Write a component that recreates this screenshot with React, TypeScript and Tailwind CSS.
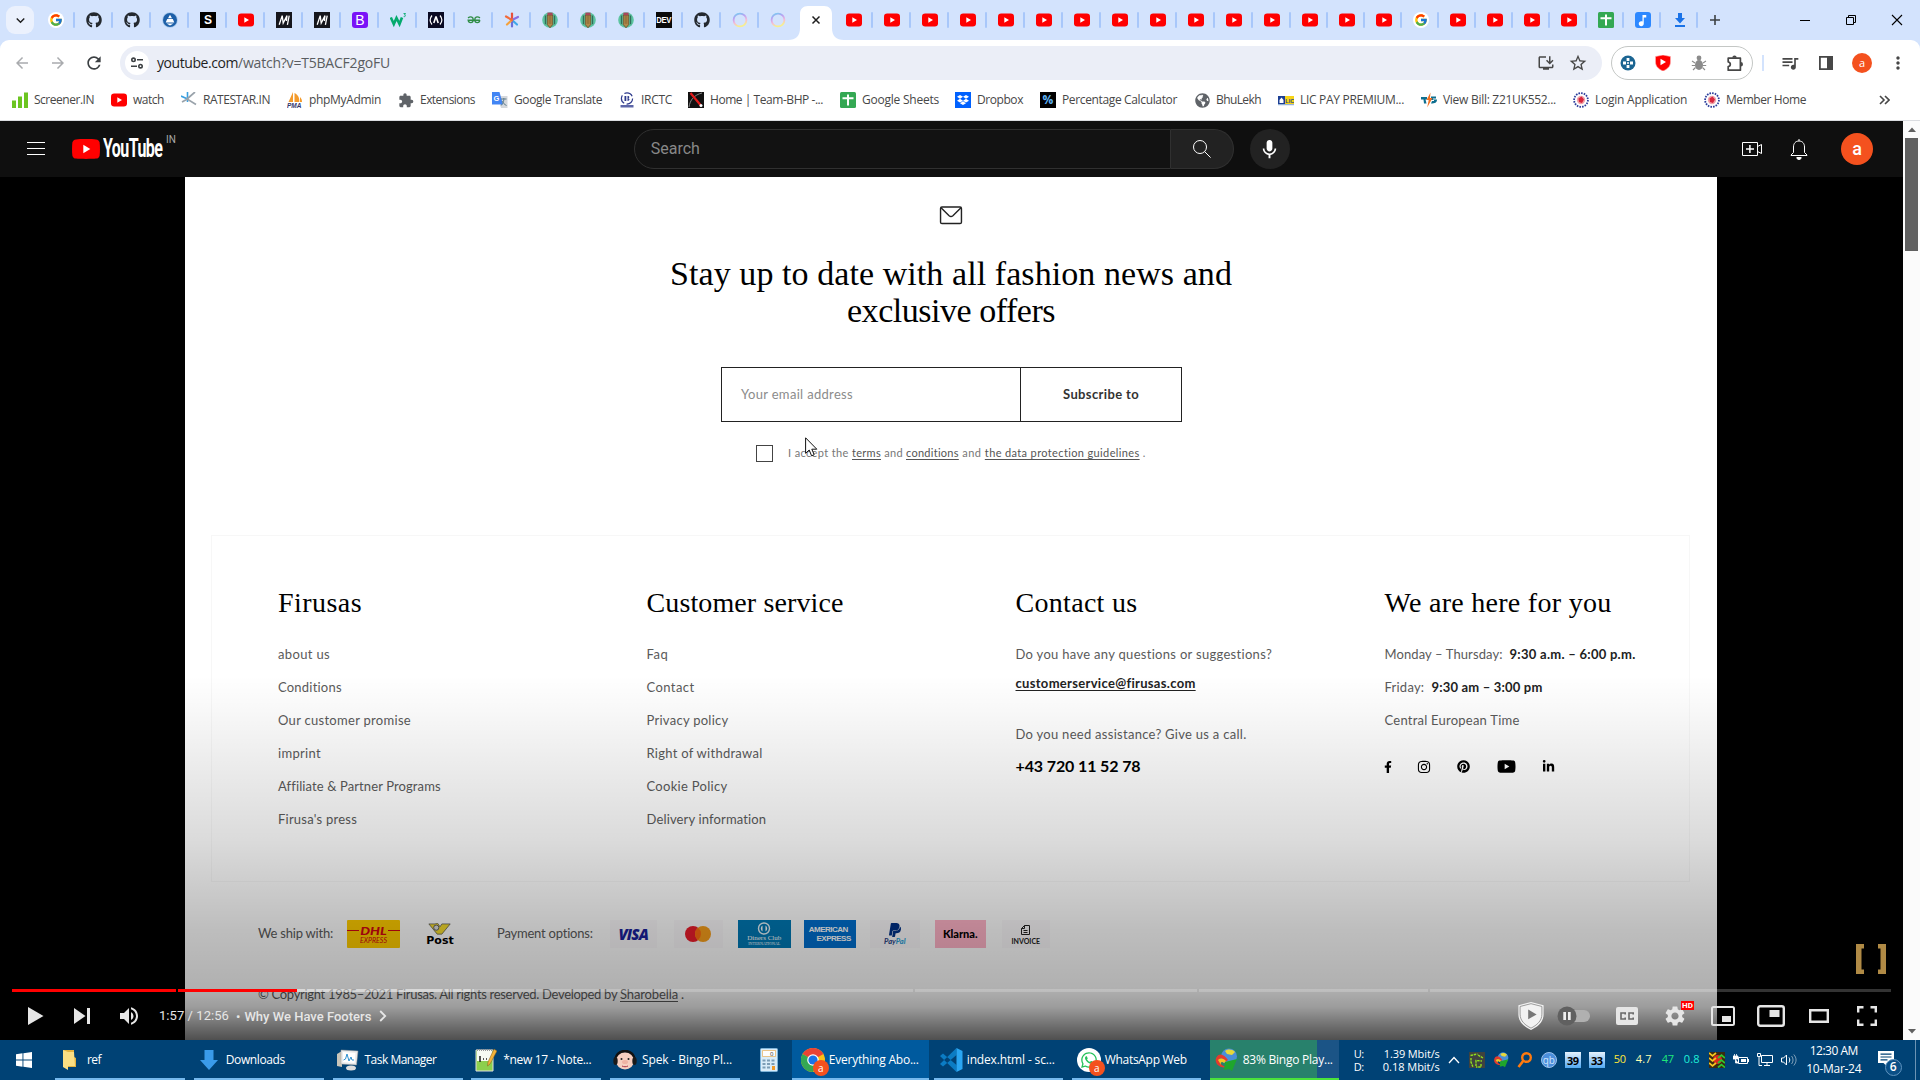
import React, { useLayoutEffect, useRef } from "react";
import { FcGoogle } from "react-icons/fc";
import {
  FaGithub, FaFacebookF, FaInstagram, FaPinterest, FaYoutube, FaLinkedinIn,
  FaDropbox, FaWhatsapp, FaPaypal, FaGlobeAmericas,
} from "react-icons/fa";
import {
  MdArrowBack, MdArrowForward, MdRefresh, MdStarOutline, MdExtension, MdMic,
  MdSettings, MdVolumeUp, MdMusicNote, MdQueueMusic,
  MdMoreVert, MdInstallDesktop, MdKeyboardArrowDown,
} from "react-icons/md";

/** Single line of text tracked so that it spans exactly `w` pixels. */
function Fit({ w, className = "", children }: { w: number; className?: string; children: string }) {
  const ref = useRef<HTMLSpanElement>(null);
  useLayoutEffect(() => {
    const el = ref.current;
    if (!el) return;
    el.style.letterSpacing = "0px";
    const natural = el.getBoundingClientRect().width;
    el.style.letterSpacing = `${(w - natural) / children.length}px`;
  }, [w, children]);
  return (
    <span ref={ref} className={`inline-block shrink-0 whitespace-pre ${className}`}>
      {children}
    </span>
  );
}

/* ---------- small logos ---------- */

const YtMark = ({ className = "h-[14px] w-4" }: { className?: string }) => (
  <svg viewBox="0 0 16 14" className={className}>
    <rect x="0" y="0.5" width="16" height="13" rx="3.2" fill="#f00" />
    <path d="M6.3 4.2v5.6L11 7z" fill="#fff" />
  </svg>
);

const SheetMark = () => (
  <svg viewBox="0 0 16 16" className="size-4">
    <rect width="16" height="16" rx="1.5" fill="#34a853" />
    <path d="M7 2.5h2v11H7zM2.5 5.3h11v2h-11z" fill="#fff" />
  </svg>
);

const PencilMark = () => (
  <svg viewBox="0 0 16 16" className="size-4">
    <circle cx="8" cy="8" r="7.8" fill="#5cc4a0" />
    <path d="M3.400 3.600v8.600M12.600 3.600v8.600" stroke="#2f6f5a" strokeWidth="1.200" />
    <path d="M5.200 3h5.600v9.500L8 15.800 5.200 12.500z" fill="#b0894a" stroke="#5b3d1f" strokeWidth=".7" />
    <path d="M5.400.6h5.200v2.600H5.400z" fill="#a8475b" />
    <path d="M7.200 3.500v8.400M8.800 3.500v8.400" stroke="#7a5a2c" strokeWidth=".6" />
  </svg>
);

const Tile = ({ className, children }: { className: string; children: React.ReactNode }) => (
  <span className={`flex size-4 items-center justify-center leading-none ${className}`}>{children}</span>
);

const RingMark = () => (
  <svg viewBox="0 0 16 16" className="size-4">
    <defs>
      <linearGradient id="ring" x1="0" y1="0" x2="0.300" y2="1">
        <stop offset="0" stopColor="#6fd0f0" />
        <stop offset=".35" stopColor="#b8a0f2" />
        <stop offset=".7" stopColor="#f5b9d8" />
        <stop offset="1" stopColor="#f7ee8e" />
      </linearGradient>
    </defs>
    <circle cx="8" cy="8" r="6.400" fill="none" stroke="url(#ring)" strokeWidth="1.800" />
  </svg>
);

const GoogleMark = () => (
  <span className="flex size-4 items-center justify-center rounded-full bg-white"><FcGoogle size={14} /></span>
);

const StarMark = () => (
  <svg viewBox="0 0 16 16" className="size-4" strokeWidth="2.200" strokeLinecap="round">
    <path d="M8 8V1.500" stroke="#e8503a" />
    <path d="M8 8l6-3" stroke="#8a6ee0" />
    <path d="M8 8l5 4.500" stroke="#3fa7e8" />
    <path d="M8 8v6.500" stroke="#6b6fd8" />
    <path d="M8 8l-5 4.500" stroke="#f5a13c" />
    <path d="M8 8L2 4.500" stroke="#f26b3a" />
  </svg>
);

const FaviconM = () => (
  <Tile className="bg-[#15161c]">
    <svg viewBox="0 0 16 16" className="size-4"><path d="M3.200 12.800L6.200 3.600 7.200 11 11 3.600l-.6 5.400M13.200 3.600l-1.800 9.200" fill="none" stroke="#fff" strokeWidth="1.300" /></svg>
  </Tile>
);

const yt = (n: number): React.ReactNode[] => Array.from({ length: n }, () => <YtMark />);

const leftTabs: React.ReactNode[] = [
  <GoogleMark />,
  <FaGithub size={16} color="#24292f" />,
  <FaGithub size={16} color="#24292f" />,
  <svg viewBox="0 0 16 16" className="size-4"><circle cx="8" cy="8" r="7.800" fill="#a9c8ea" /><circle cx="8" cy="8" r="7" fill="#1d5fa8" /><path d="M8 2.800L10 6.200H6zM5.200 7h5.600l1.500 3.500H3.700zM4.500 11.500h7L8 13.500z" fill="#fff" /></svg>,
  <Tile className="bg-black font-['Liberation_Sans'] text-[12px] font-bold text-white">S</Tile>,
  <YtMark />,
  <FaviconM />,
  <FaviconM />,
  <Tile className="rounded-[3px] bg-[#7a13f7] font-['Liberation_Sans'] text-[14px] text-white">B</Tile>,
  <svg viewBox="0 0 16 16" className="size-4"><path d="M.8 5.500l3 6.500L6.500 6l3 6L12 5.500" fill="none" stroke="#04aa6d" strokeWidth="2.600" /><path d="M13.500 1.500h2l-1 1.500c1.500 0 1.200 2-.8 1.600" fill="none" stroke="#04aa6d" strokeWidth=".9" /></svg>,
  <Tile className="bg-[#0a0a23]"><svg viewBox="0 0 16 16" className="size-4" fill="none" stroke="#fff" strokeWidth="1.200"><path d="M4 3.500c-2.500 3-2.500 6 0 9M12 3.500c2.500 3 2.500 6 0 9" /><path d="M8 4.500L5.800 11M8 4.500L10.200 11" strokeWidth="1.600" /></svg></Tile>,
  <svg viewBox="0 0 16 16" className="size-4" fill="none" stroke="#2f8d46" strokeWidth="1.400"><path d="M2 5.800C5 3.800 7.400 5.200 7.200 8 7 11.500 2.500 11.300 2.200 8.300H14M14 5.800C11 3.800 8.600 5.200 8.800 8c.2 3.500 4.700 3.300 5 .3" /></svg>,
  <StarMark />,
  <PencilMark />,
  <PencilMark />,
  <PencilMark />,
  <Tile className="bg-[#0a0a0a]"><span className="scale-x-[0.850] font-['Liberation_Sans'] text-[9px] leading-none font-bold tracking-[-0.400px] text-white">DEV</span></Tile>,
  <FaGithub size={16} color="#24292f" />,
  <RingMark />,
  <RingMark />,
];

const rightTabs: { icon: React.ReactNode; wide?: boolean }[] = [
  ...yt(12).map((icon) => ({ icon, wide: true })),
  ...yt(3).map((icon) => ({ icon })),
  { icon: <GoogleMark /> },
  ...yt(4).map((icon) => ({ icon })),
  { icon: <SheetMark /> },
  { icon: <Tile className="rounded-[3px] bg-[#2d88ff]"><MdMusicNote size={15} color="#fff" /></Tile> },
  { icon: <svg viewBox="0 0 16 16" className="size-4"><path d="M6 1h4v5h3l-5 5.500L3 6h3zM3 13h10v2H3z" fill="#1a73e8" /></svg> },
];

function TabStrip() {
  return (
    <div className="flex h-10 items-center bg-[#d3e3fd]">
      <div className="ml-[6px] flex h-7 w-7 items-center justify-center rounded-[9px] bg-[#ebf1fd]">
        <MdKeyboardArrowDown size={17} color="#1f1f1f" />
      </div>
      <div className="ml-[3px] flex h-10 items-center">
        {leftTabs.map((icon, i) => (
          <div key={i} className="flex h-4 w-[38px] items-center">
            <div className="flex grow justify-center pl-[2px]">{icon}</div>
            <div className={i === 19 ? "w-[2px]" : "h-4 w-[2px] rounded bg-[#a8c7fa]"} />
          </div>
        ))}
        <svg viewBox="0 0 56 34" className="-mx-[9px] h-[34px] w-14 self-end">
          <path d="M0 34c8 0 12-4 12-12V8c0-5 3-8 8-8h16c5 0 8 3 8 8v14c0 8 4 12 12 12z" fill="#fff" />
          <path d="M24.500 10.500l7 7M31.500 10.500l-7 7" stroke="#1f1f1f" strokeWidth="1.500" />
        </svg>
        {rightTabs.map((t, i) => (
          <div key={i} className={`flex h-4 items-center ${t.wide ? "w-[38px]" : "w-[37px]"}`}>
            <div className="flex grow justify-center pl-[2px]">{t.icon}</div>
            <div className="h-4 w-[2px] rounded bg-[#a8c7fa]" />
          </div>
        ))}
      </div>
      <svg viewBox="0 0 12 12" className="ml-[11px] size-3"><path d="M6 1v10M1 6h10" stroke="#3c4043" strokeWidth="1.600" /></svg>
      <div className="ml-auto flex text-black">
        <svg viewBox="0 0 46 40" className="h-10 w-[46px]"><path d="M18 20.500h10" stroke="#000" /></svg>
        <svg viewBox="0 0 46 40" className="h-10 w-[46px]" fill="none" stroke="#000"><path d="M18.500 17.500h7v7h-7zM20.500 17.500v-2h7v7h-2" /></svg>
        <svg viewBox="0 0 46 40" className="h-10 w-[46px]"><path d="M18 15l10 10M28 15L18 25" stroke="#000" strokeWidth="1.100" /></svg>
      </div>
    </div>
  );
}

function Toolbar() {
  return (
    <div className="bg-[#d3e3fd]">
      <div className="flex h-[46px] items-center rounded-t-[9px] bg-white">
        <div className="flex w-[120px] items-center pl-[13px]">
          <MdArrowBack size={18} color="#a9abae" />
          <MdArrowForward size={18} color="#a9abae" className="ml-[18px]" />
          <MdRefresh size={20} color="#3c4043" className="ml-[17px]" />
        </div>
        <div className="flex h-[34px] w-[1482px] items-center rounded-full bg-[#ebeef7] pl-[5px]">
          <div className="flex size-6 items-center justify-center rounded-full bg-white">
            <svg viewBox="0 0 14 14" className="size-[14px]" fill="none" stroke="#3c4043" strokeWidth="1.600">
              <circle cx="3.500" cy="3.800" r="1.700" /><path d="M7 3.800h6M1 10.200h6" /><circle cx="10.500" cy="10.200" r="1.700" />
            </svg>
          </div>
          <div className="mb-px ml-2 flex text-[14px] text-[#1f1f1f]">
            <Fit w={81}>youtube.com</Fit>
            <Fit w={152} className="text-[#5a5d61]">/watch?v=T5BACF2goFU</Fit>
          </div>
          <MdInstallDesktop size={18} color="#474747" className="ml-auto" />
          <MdStarOutline size={20} color="#474747" className="mr-[14px] ml-[13px]" />
        </div>
        <div className="ml-[9px] flex h-[34px] w-[142px] items-center justify-between rounded-full border border-[#c4c7c5] pr-2 pl-[8px]">
          <svg viewBox="0 0 16 16" className="size-4"><circle cx="8" cy="8" r="7.500" fill="#1b6592" /><path d="M8 3v3M8 10v3M3 8h3M10 8h3" stroke="#fff" strokeWidth="2.800" strokeLinejoin="round" /><circle cx="8" cy="8" r="1" fill="#fff" /></svg>
          <svg viewBox="0 0 16 16" className="size-4"><path d="M8 0l7.500 1.500V7c0 5-4 7.500-7.500 9C4.500 14.500.5 12 .5 7V1.500z" fill="#f00" stroke="#ffb3b3" strokeWidth=".6" /><path d="M5.500 3.800v6.400L11 7z" fill="#fff" /></svg>
          <svg viewBox="0 0 16 16" className="size-4"><circle cx="8" cy="3" r="2.400" fill="#8b8b8b" /><ellipse cx="8" cy="10" rx="4" ry="5" fill="#8b8b8b" /><path d="M1 6l3 2M15 6l-3 2M.8 10.500H4M15.200 10.500H12M2 15l2.500-2.500M14 15l-2.500-2.500" stroke="#8b8b8b" strokeWidth="1.100" /></svg>
          <svg viewBox="0 0 18 18" className="size-[18px]"><path d="M2.200 4.200h12.200v12H2.200v-3.700c2.800-.3 2.800-4.200 0-4.500z" fill="none" stroke="#474747" strokeWidth="1.700" strokeLinejoin="round" /><path d="M6.300 3.800a2.200 2.200 0 0 1 4.400 0zM14.800 8a2.200 2.200 0 0 1 0 4.400z" fill="#474747" /></svg>
        </div>
        <div className="ml-[9px] h-4 w-[2px] bg-[#d3e3fd]" />
        <MdQueueMusic size={20} color="#474747" className="ml-4" />
        <svg viewBox="0 0 16 16" className="ml-[18px] size-4"><path d="M1.900 1.900h12.200v12.200H1.900z" fill="none" stroke="#474747" strokeWidth="1.800" /><path d="M9 2h5v12H9z" fill="#474747" /></svg>
        <div className="ml-[18px] flex size-5 items-center justify-center rounded-full bg-[#f4511e] pb-[1px] text-[11px] leading-none text-white">a</div>
        <MdMoreVert size={20} color="#474747" className="ml-4" />
      </div>
    </div>
  );
}

const MemberMark = () => (
  <svg viewBox="0 0 16 16" className="size-4">
    <circle cx="8" cy="8" r="6.900" fill="none" stroke="#2a3c9a" strokeWidth="1.800" strokeDasharray="1.600 1.100" />
    <circle cx="8" cy="8" r="4.200" fill="#f2a3a8" />
    <path d="M5.500 6.500l3-2 2.500 3-2 3.500-3-1z" fill="#d7263d" />
  </svg>
);

const bookmarks: { icon: React.ReactNode; label: string; w: number; cell: string }[] = [
  { icon: <svg viewBox="0 0 16 16" className="size-4"><path d="M0 8.500h4V16H0zM6 4.500h4V16H6zM12 .5h4V16h-4z" fill="#6cc521" /></svg>, label: "Screener.IN", w: 60, cell: "w-[99px]" },
  { icon: <YtMark />, label: "watch", w: 31, cell: "w-[70px]" },
  { icon: <svg viewBox="0 0 16 16" className="size-4" fill="none"><path d="M6.500 0v10M0 4l6.500 3" stroke="#3aa0e0" strokeWidth="1.600" /><path d="M14 0L6 7l9 5.500M6.500 7L1 10" stroke="#9aa3ab" strokeWidth="1.700" /></svg>, label: "RATESTAR.IN", w: 67, cell: "w-[106px]" },
  { icon: <svg viewBox="0 0 16 16" className="size-4"><path d="M6 0v10H1.500zM7.500 1c4 2 5 5 4.800 9H7.500zM13 5c1.500 1.500 2 3 2 5h-2z" fill="#f39a2b" /><text x="0" y="16" fontSize="6.500" fontWeight="700" fontStyle="italic" fill="#33366b" fontFamily="Liberation Sans">PMA</text></svg>, label: "phpMyAdmin", w: 72, cell: "w-[111px]" },
  { icon: <MdExtension size={17} color="#5f6368" />, label: "Extensions", w: 55, cell: "w-[94px]" },
  { icon: <svg viewBox="0 0 16 16" className="size-4"><path d="M6 4h9.500v12H9z" fill="#d5d8dc" /><path d="M0 0h7.500L11 12.500H0z" fill="#4285f4" /><text x="1.500" y="9" fontSize="7.500" fontWeight="700" fill="#fff" fontFamily="Liberation Sans">G</text><path d="M9 7h5.500M11.800 6v1.500c0 3-1.500 5-3 6M10 9c1 2 2.500 3.500 4.500 4.500" fill="none" stroke="#5f7d8c" /></svg>, label: "Google Translate", w: 88, cell: "w-[127px]" },
  { icon: <svg viewBox="0 0 16 16" className="size-4"><circle cx="8" cy="6.500" r="5.600" fill="none" stroke="#2e3a8c" strokeWidth="1.200" strokeDasharray="9 2.500" /><path d="M5.500 4h1.800v5H5.500zM8.500 4c2.500 0 2.500 2.200 0 2.300 2.800 0 2.500 2.700 0 2.700z" fill="#2e3a8c" /><path d="M1.500 13h13v2.500h-13z" fill="#5d66a8" /></svg>, label: "IRCTC", w: 31, cell: "w-[69px]" },
  { icon: <svg viewBox="0 0 16 16" className="size-4"><rect width="16" height="16" fill="#111" /><path d="M1 15C2 8 6 3 14 1" stroke="#888" fill="none" /><path d="M2.500 1l10 12" stroke="#e31b1b" strokeWidth="2.200" /><circle cx="13" cy="13.500" r="1.500" fill="#fff" /></svg>, label: "Home | Team-BHP -...", w: 113, cell: "w-[152px]" },
  { icon: <SheetMark />, label: "Google Sheets", w: 77, cell: "w-[115px]" },
  { icon: <Tile className="bg-[#0061fe]"><FaDropbox size={12} color="#fff" /></Tile>, label: "Dropbox", w: 46, cell: "w-[85px]" },
  { icon: <Tile className="bg-black text-[12px] font-bold text-[#5fb4f5]">%</Tile>, label: "Percentage Calculator", w: 115, cell: "w-[154px]" },
  { icon: <FaGlobeAmericas size={15} color="#5f6368" />, label: "BhuLekh", w: 45, cell: "w-[84px]" },
  { icon: <svg viewBox="0 0 16 16" className="size-4"><path d="M0 4h7v8H0z" fill="#1c3f94" /><path d="M7 4h9v8H7z" fill="#f7d417" /><path d="M0 12.200h16v1H0z" fill="#7a9fd0" /><path d="M1.500 8L3.500 5.500 5.500 8v3h-4z" fill="#fff" /><text x="7.300" y="10.600" fontSize="5.500" fontWeight="700" fill="#1c3f94" fontFamily="Liberation Sans">LIC</text></svg>, label: "LIC PAY PREMIUM...", w: 104, cell: "w-[143px]" },
  { icon: <svg viewBox="0 0 16 16" className="size-4"><path d="M0 5h6v2.500H4.500l1 4H3l-.5-4H0zM10 4.500h5v2h-3v1h4c0 3-2 4-6 4l1-2.500h2v-1H10z" fill="#0f6f8f" /><path d="M9.500.5L5.500 8h2.200l-1.500 7.500L11.500 6H9z" fill="#f37021" /></svg>, label: "View Bill: Z21UK552...", w: 113, cell: "w-[152px]" },
  { icon: <MemberMark />, label: "Login Application", w: 92, cell: "w-[131px]" },
  { icon: <MemberMark />, label: "Member Home", w: 80, cell: "w-[120px]" },
];

function Bookmarks() {
  return (
    <div className="flex h-[35px] items-center border-b border-[#dadce0] bg-white pb-[6px] pl-3 text-[12px] text-[#474747]">
      {bookmarks.map((b, i) => (
        <div key={i} className={`flex shrink-0 items-center gap-[6px] ${b.cell}`}>
          <span className="flex w-4 shrink-0 justify-center">{b.icon}</span>
          <Fit w={b.w}>{b.label}</Fit>
        </div>
      ))}
      <svg viewBox="0 0 12 12" className="mr-[30px] ml-auto size-3" fill="none" stroke="#474747" strokeWidth="1.600"><path d="M2 2l4 4-4 4M7 2l4 4-4 4" /></svg>
    </div>
  );
}

function YtHeader() {
  return (
    <header className="flex h-14 items-center bg-[#0f0f0f] font-['Roboto',sans-serif]">
      <svg viewBox="0 0 18 14" className="ml-[27px] h-[14px] w-[18px]"><path d="M0 .5h18M0 6.500h18M0 12.500h18" stroke="#fff" /></svg>
      <svg viewBox="0 0 28 20" className="ml-[27px] h-5 w-7">
        <path d="M4 .4C8 0 20 0 24 .4c2 .2 3.300 1.200 3.600 3.200.5 3.500.5 9.300 0 12.800-.3 2-1.600 3-3.600 3.200-4 .4-16 .4-20 0-2-.2-3.300-1.200-3.600-3.200-.5-3.500-.5-9.300 0-12.800C.7 1.600 2 .6 4 .4z" fill="#f00" />
        <path d="M11.300 5.800v8.400l7-4.200z" fill="#fff" />
      </svg>
      <div className="ml-[3px] w-[59px]">
        <div className="origin-left scale-x-[0.640] font-['Roboto'] text-[25px] leading-5 font-bold tracking-[-0.900px] text-white">YouTube</div>
      </div>
      <span className="mb-[19px] ml-1 text-[10px] leading-none text-[#aaa]">IN</span>
      <div className="ml-[458px] flex h-10 items-center">
        <div className="flex h-10 w-[537px] items-center rounded-l-full border border-[#303030] bg-[#121212] pl-4 text-[16px] text-[#888]">
          <Fit w={49}>Search</Fit>
        </div>
        <div className="flex h-10 w-[63px] items-center justify-center rounded-r-full border border-l-0 border-[#303030] bg-[#222]">
          <svg viewBox="0 0 18 18" className="size-[18px]" fill="none" stroke="#fff" strokeWidth="1"><circle cx="7" cy="7" r="6.500" /><path d="M11.600 11.600l6 6" /></svg>
        </div>
        <div className="ml-4 flex size-10 items-center justify-center rounded-full bg-[#222]"><MdMic size={23} color="#fff" /></div>
      </div>
      <svg viewBox="0 0 22 16" className="ml-auto h-4 w-[22px]" fill="none" stroke="#fff"><path d="M1.500 1.500h15v13h-15zM16.500 5.500l4-2v9l-4-2" /><path d="M8.900 4v8M5 8h8" strokeWidth="1.500" /></svg>
      <svg viewBox="0 0 18 22" className="ml-[27px] h-[22px] w-[18px]" fill="none" stroke="#fff"><path d="M9 1v2M9 3C5.500 3 3.500 5.500 3.500 9v5.500L1 17v.5h16V17l-2.500-2.500V9C14.500 5.500 12.500 3 9 3z" /><path d="M6.800 19.500a2.200 2 0 0 0 4.400 0z" fill="#fff" /></svg>
      <div className="mr-[30px] ml-[33px] flex size-8 items-center justify-center rounded-full bg-[#f4511e] text-[18px] leading-none font-medium text-white">a</div>
    </header>
  );
}

/* ---------- web page shown inside the video ---------- */

const ColumnTitle = ({ w, children }: { w: number; children: string }) => (
  <h3 className="h-10 font-['Liberation_Serif',serif] text-[28px] leading-10 text-black"><Fit w={w}>{children}</Fit></h3>
);

function LinkColumn({ title, w, links }: { title: string; w: number; links: [string, number][] }) {
  return (
    <div>
      <ColumnTitle w={w}>{title}</ColumnTitle>
      <ul className="mt-[15px]">
        {links.map(([label, lw]) => (
          <li key={label} className="h-[33px] leading-[33px]"><Fit w={lw}>{label}</Fit></li>
        ))}
      </ul>
    </div>
  );
}

function StorePage() {
  return (
    <div className="flex h-full flex-col bg-white pt-[29px] font-['Lato',sans-serif] text-[13px] text-[#5a5a5a]">
      <svg viewBox="0 0 24 20" className="ml-[754px] h-[19px] w-6 shrink-0" fill="none" stroke="#222" strokeWidth="1.500"><rect x="1" y="1" width="22" height="17.500" rx="1.500" /><path d="M1.500 1.800l8.500 8.400c1.200 1 2.800 1 4 0l8.500-8.400" /></svg>
      <h2 className="mt-[30px] flex flex-col font-['Liberation_Serif',serif] text-[34px] leading-[37px] text-black">
        <Fit w={562} className="ml-[485px] self-start">Stay up to date with all fashion news and</Fit>
        <Fit w={208} className="ml-[662px] self-start">exclusive offers</Fit>
      </h2>
      <div className="mt-[38px] ml-[536px] flex h-[55px] w-[461px] border border-[#222]">
        <div className="flex w-[299px] items-center border-r border-[#222] pl-[19px] text-[#8b8b8b]"><Fit w={112}>Your email address</Fit></div>
        <div className="flex grow items-center pl-[42px] font-bold text-[#333]"><Fit w={76}>Subscribe to</Fit></div>
      </div>
      <div className="mt-[23px] ml-[571px] flex h-[17px] items-center text-[11px] text-[#777]">
        <div className="mr-[15px] size-[17px] border border-[#444]" />
        <Fit w={64}>I accept the </Fit>
        <Fit w={29} className="text-[#555] underline underline-offset-2">terms</Fit>
        <Fit w={25}> and </Fit>
        <Fit w={53} className="text-[#555] underline underline-offset-2">conditions</Fit>
        <Fit w={26}> and </Fit>
        <Fit w={155} className="text-[#555] underline underline-offset-2">the data protection guidelines</Fit>
        <Fit w={6}> .</Fit>
      </div>

      <div className="mt-[73px] ml-[26px] grid h-[347px] w-[1479px] shrink-0 grid-cols-[368.500px_369px_369px_1fr] border border-[#f7f7f7] pt-[47px] pl-[66px]">
        <LinkColumn title="Firusas" w={84} links={[["about us", 52], ["Conditions", 64], ["Our customer promise", 133], ["imprint", 43], ["Affiliate & Partner Programs", 162], ["Firusa's press", 79]]} />
        <LinkColumn title="Customer service" w={197} links={[["Faq", 22], ["Contact", 48], ["Privacy policy", 82], ["Right of withdrawal", 116], ["Cookie Policy", 81], ["Delivery information", 120]]} />
        <div className="flex flex-col items-start">
          <ColumnTitle w={122}>Contact us</ColumnTitle>
          <Fit w={257} className="mt-[15px] leading-[33px]">Do you have any questions or suggestions?</Fit>
          <Fit w={180} className="-mt-1 leading-[32px] font-bold text-[#222] underline underline-offset-2">customerservice@firusas.com</Fit>
          <Fit w={231} className="mt-[19px] leading-[33px]">Do you need assistance? Give us a call.</Fit>
          <Fit w={125} className="-mt-px text-[16px] leading-[32px] font-bold text-black">+43 720 11 52 78</Fit>
        </div>
        <div className="flex flex-col items-start">
          <ColumnTitle w={227}>We are here for you</ColumnTitle>
          <div className="mt-[15px] h-[33px] leading-[33px]"><Fit w={125}>Monday – Thursday:  </Fit><Fit w={126} className="font-bold text-[#222]">9:30 a.m. – 6:00 p.m.</Fit></div>
          <div className="h-[33px] leading-[33px]"><Fit w={47}>Friday:  </Fit><Fit w={111} className="font-bold text-[#222]">9:30 am – 3:00 pm</Fit></div>
          <div className="h-[33px] leading-[33px]"><Fit w={135}>Central European Time</Fit></div>
          <div className="mt-5 flex items-center text-black">
            <FaFacebookF size={12} className="-ml-[3px]" />
            <FaInstagram size={14} className="ml-[23px]" />
            <FaPinterest size={13} className="ml-[26px]" />
            <FaYoutube size={19} className="ml-[27px]" />
            <FaLinkedinIn size={13} className="ml-[26px]" />
          </div>
        </div>
      </div>

      <div className="mt-[38px] flex h-7 shrink-0 items-center pl-[73px]">
        <Fit w={75}>We ship with:</Fit>
        <div className="ml-[14px] flex h-7 w-[53px] flex-col items-center justify-center rounded-[1px] bg-[#ffcc00] text-[#d40511]">
          <div className="flex w-full items-center"><i className="h-px grow bg-[#d40511]" /><b className="inline-block scale-x-[1.150] px-[3px] text-[12px] leading-[11px] font-black italic">DHL</b><i className="h-px grow bg-[#d40511]" /></div>
          <span className="text-[7px] leading-[8px] italic">EXPRESS</span>
        </div>
        <div className="ml-[16px] flex h-7 w-12 flex-col items-center">
          <svg viewBox="0 0 24 14" className="mt-[3px] h-[13px] w-6"><path d="M0 1h7c0-1 3-1 3 0l2 3 2-3h9l-9 11H9z" fill="#f5dc2e" stroke="#555" strokeWidth=".8" /><circle cx="8" cy="5" r="2.800" fill="#ddd" stroke="#555" /></svg>
          <b className="font-['DejaVu_Sans'] text-[11px] leading-[10px] text-black">Post</b>
        </div>
        <Fit w={96} className="ml-[33px]">Payment options:</Fit>
        <div className="ml-[17px] flex h-7 w-[47px] items-center justify-center bg-[#fbf9fb] font-['Open_Sans'] text-[15px] font-extrabold tracking-[-0.800px] text-[#1a1f9c] italic">VISA</div>
        <div className="ml-[17px] flex h-7 w-[49px] items-center justify-center bg-[#fbf9fb]">
          <svg viewBox="0 0 26 16" className="h-4 w-[26px]"><circle cx="8" cy="8" r="8" fill="#eb1c2b" /><circle cx="18" cy="8" r="8" fill="#f79e1b" /><path d="M13 1.800a8 8 0 0 1 0 12.400 8 8 0 0 1 0-12.400z" fill="#ff6a10" /></svg>
        </div>
        <div className="ml-[15px] flex h-7 w-[53px] flex-col items-center justify-center bg-[#0079b5] font-['Liberation_Serif'] text-white">
          <svg viewBox="0 0 14 13" className="h-[13px] w-[14px]"><circle cx="7" cy="6.500" r="5.500" fill="none" stroke="#e6f3fa" strokeWidth="1.400" /><path d="M5.500 3.500a3.500 3.500 0 0 0 0 6zM8.500 3.500a3.500 3.500 0 0 1 0 6z" fill="#fff" /></svg>
          <span className="text-[7px] leading-[7px]">Diners Club</span>
          <span className="text-[4px] leading-[4px]">INTERNATIONAL</span>
        </div>
        <div className="ml-[13px] flex h-7 w-[52px] flex-col justify-center bg-[#006fcf] px-[5px] font-['Liberation_Sans'] text-[8px] leading-[9px] font-bold tracking-[-0.500px] text-white">
          <span>AMERICAN</span><span className="self-end">EXPRESS</span>
        </div>
        <div className="ml-[14px] flex h-7 w-[50px] flex-col items-center bg-[#fbf9fb]">
          <FaPaypal size={16} color="#003087" className="mt-[2px]" />
          <b className="text-[7.500px] leading-[8px] text-[#253b80] italic">Pay<span className="text-[#179bd7]">Pal</span></b>
        </div>
        <div className="ml-[15px] flex h-7 w-[51px] items-center justify-center bg-[#ffb3c7] text-[11px] font-black text-black">Klarna.</div>
        <div className="ml-[16px] flex h-7 w-[48px] flex-col items-center bg-[#fbf9fb] pt-[5px]">
          <svg viewBox="0 0 9 10" className="h-[10px] w-[9px]" fill="none" stroke="#222"><path d="M3.500.5h5v9h-8v-6zM3.500.5v3h-3M2.500 5.500h4M2.500 7.500h4" /></svg>
          <b className="mt-[2px] text-[7px] leading-[8px] text-[#222]">INVOICE</b>
        </div>
      </div>

      <div className="mt-[37px] flex h-5 shrink-0 items-center pl-[73px]">
        <Fit w={362}>© Copyright 1985–2021 Firusas. All rights reserved. Developed by </Fit>
        <Fit w={58} className="underline underline-offset-2">Sharobella</Fit>
        <Fit w={6}> .</Fit>
      </div>
    </div>
  );
}

function Player() {
  return (
    <div className="relative flex h-[863px] justify-center overflow-hidden bg-black">
      <div className="mr-[1px] h-full w-[1532px]"><StorePage /></div>
      <div className="absolute inset-x-0 bottom-0 h-[365px] bg-[linear-gradient(to_bottom,transparent_0%,rgba(0,0,0,0.020)_7%,rgba(0,0,0,0.140)_45%,rgba(0,0,0,0.260)_70%,rgba(0,0,0,0.310)_86%,rgba(0,0,0,0.390)_91%,rgba(0,0,0,0.560)_96%,rgba(0,0,0,0.690)_100%)]" />
      <div className="absolute inset-x-0 bottom-0 flex flex-col font-['Roboto',sans-serif] text-[#e6e6e6]">
        <svg viewBox="0 0 30 30" className="mr-[17px] mb-[15px] size-[30px] self-end"><path d="M0 0h8v4.500H5.500v21H8V30H0zM30 0h-8v4.500h2.500v21H22V30h8z" fill="#b08a45" /></svg>
        <div className="mx-3 flex h-[3px] gap-[2px]">
          <div className="w-[164px] bg-[#f00]" />
          <div className="flex w-[735px] bg-white/20"><div className="w-[119px] bg-[#f00]" /><div className="w-[177px] bg-white/40" /></div>
          <div className="w-[282px] bg-white/20" />
          <div className="w-[229px] bg-white/20" />
          <div className="grow bg-white/20" />
        </div>
        <div className="flex h-12 items-center">
          <svg viewBox="0 0 16 18" className="ml-7 h-[18px] w-4"><path d="M0 0v18l15.500-9z" fill="currentColor" /></svg>
          <svg viewBox="0 0 16 16" className="ml-[30px] size-4"><path d="M0 0v16l11.500-8zM13 0h3v16h-3z" fill="currentColor" /></svg>
          <MdVolumeUp size={24} className="ml-[27px]" />
          <div className="ml-[18px] text-[13px]"><Fit w={70}>1:57 / 12:56</Fit></div>
          <div className="mt-px ml-[7px] text-[13px]">•</div>
          <div className="mt-px ml-[4px] text-[13px] font-medium"><Fit w={127}>Why We Have Footers</Fit></div>
          <svg viewBox="0 0 8 12" className="ml-2 h-3 w-2"><path d="M1.200 1l5 5-5 5" fill="none" stroke="currentColor" strokeWidth="1.800" /></svg>
          <svg viewBox="0 0 28 30" className="ml-auto h-[28px] w-7"><path d="M14 0l13.500 3.500V13c0 9-6.500 13.500-13.500 17C7 26.500.5 22 .5 13V3.500z" fill="#f2f2f2" /><path d="M14 1.800l11.700 3v8.200c0 7.500-5.700 11.900-11.700 15C8 24.900 2.300 20.500 2.300 13V4.800z" fill="none" stroke="#8a8a8a" strokeWidth=".9" /><path d="M11 8v10.500l9-5.200z" fill="#777" /></svg>
          <svg viewBox="0 0 34 20" className="ml-[12px] h-5 w-[34px]"><rect x="6" y="4" width="27" height="12" rx="6" fill="#b0b0b0" /><circle cx="10" cy="10" r="9.500" fill="#606060" /><path d="M6.300 6h2.700v8H6.300zM11 6h2.700v8H11z" fill="#eee" /></svg>
          <svg viewBox="0 0 22 18" className="ml-[25px] h-[18px] w-[22px]"><rect width="22" height="18" rx="2" fill="#e6e6e6" /><path d="M9.200 7.500V6H5v6h4.200v-1.500M17.200 7.500V6H13v6h4.200v-1.500" fill="none" stroke="#6a6a6a" strokeWidth="1.600" /></svg>
          <div className="relative ml-[25px]">
            <MdSettings size={24} />
            <span className="absolute -top-[3px] left-[18px] bg-[#f00] px-px text-[8px] leading-[9px] font-bold text-white">HD</span>
          </div>
          <svg viewBox="0 0 24 20" className="ml-[24px] h-5 w-6"><rect x="1" y="1" width="22" height="18" rx="1.500" fill="none" stroke="currentColor" strokeWidth="2" /><path d="M11 10h9v6h-9z" fill="currentColor" /></svg>
          <svg viewBox="0 0 28 22" className="ml-[22px] h-[22px] w-7"><rect x="1.200" y="1.200" width="25.600" height="19.600" rx="2" fill="none" stroke="currentColor" strokeWidth="2.400" /><path d="M12.500 5h10v7h-10z" fill="currentColor" /></svg>
          <svg viewBox="0 0 20 14" className="ml-[24px] h-[14px] w-5"><path d="M1.200 1.200h17.600v11.600H1.200z" fill="none" stroke="currentColor" strokeWidth="2.400" /></svg>
          <svg viewBox="0 0 20 20" className="mr-[26px] ml-7 size-5"><path d="M1.200 6.500V1.200h5.300M13.500 1.200h5.300v5.300M18.800 13.500v5.300h-5.300M6.500 18.800H1.200v-5.300" fill="none" stroke="currentColor" strokeWidth="2.400" /></svg>
        </div>
      </div>
      <svg viewBox="0 0 13 20" className="absolute top-[260px] left-[805px] h-5 w-[13px]"><path d="M.6.8v15.500l3.600-3.300 2.400 5.800 2.600-1.100-2.400-5.500h5z" fill="#fff" stroke="#111" strokeWidth="1" /></svg>
    </div>
  );
}

function ScrollBar() {
  return (
    <div className="flex w-[17px] flex-col items-center justify-between bg-[#fbfbfb]">
      <div className="flex flex-col items-center">
        <svg viewBox="0 0 8 17" className="h-[17px] w-2"><path d="M0 11l4-4.500L8 11z" fill="#606060" /></svg>
        <div className="h-[113px] w-[13px] bg-[#606060]" />
      </div>
      <svg viewBox="0 0 8 17" className="h-[17px] w-2"><path d="M0 6h8l-4 4.500z" fill="#606060" /></svg>
    </div>
  );
}

/* ---------- Windows taskbar ---------- */

const Badge = () => (
  <span className="absolute -right-[4px] -bottom-[4px] flex size-[16px] items-center justify-center rounded-full bg-[#f4511e] pb-px text-[10px] leading-none text-white">a</span>
);

const tasks: { icon: React.ReactNode; label: string; w: number }[] = [
  { icon: <svg viewBox="0 0 16 22" className="h-[22px] w-4"><path d="M1 1h11v7l2 1v9H6z" fill="#e3b341" /><path d="M1 1l5 2v18l-5-3zM6 3h6l1 14H6z" fill="#fbdf83" /></svg>, label: "ref", w: 14 },
  { icon: <svg viewBox="0 0 20 20" className="size-5"><path d="M5.500 0h9v10H19l-9 10L1 10h4.500z" fill="#3a9bea" /></svg>, label: "Downloads", w: 59 },
  { icon: <svg viewBox="0 0 24 22" className="h-[22px] w-6"><path d="M1 5l5-3v16l-5-1z" fill="#c9c5b9" /><path d="M5 1l17 1-1.500 14L5 15z" fill="#ececec" stroke="#999" strokeWidth=".5" /><path d="M7 3l12.500 1-1 10L7 13z" fill="#fff" /><path d="M7.500 11l2-1 1.500-5 2 7 2-4 1 3h2" fill="none" stroke="#2d8fd0" /><ellipse cx="15" cy="19" rx="5" ry="2.500" fill="#ddd" /></svg>, label: "Task Manager", w: 72 },
  { icon: <svg viewBox="0 0 22 24" className="h-6 w-[22px]"><path d="M1 2h17v21H1z" fill="#8ccf4d" stroke="#ddd" /><path d="M2 2h15v11H2z" fill="#f7fbf3" /><path d="M2 2h16" stroke="#999" strokeDasharray="1 1" strokeWidth="2" /><path d="M5 8v6M8 11h1M11 11h1" stroke="#222" strokeWidth="1.500" /><path d="M19 1l3 2-7 13-2.500 2 .5-4z" fill="#f3b33a" stroke="#7c5b1a" strokeWidth=".5" /></svg>, label: "*new 17 - Note...", w: 88 },
  { icon: <svg viewBox="0 0 24 20" className="h-5 w-6"><path d="M3 11C2-2 22-2 21 11" fill="none" stroke="#111" strokeWidth="3" /><ellipse cx="12" cy="11" rx="9" ry="8.500" fill="#f7cfc0" /><ellipse cx="2.500" cy="11" rx="2.200" ry="4" fill="#1a1a1a" /><ellipse cx="21.500" cy="11" rx="2.200" ry="4" fill="#1a1a1a" /><circle cx="8.500" cy="9" r="1" fill="#222" /><circle cx="15.500" cy="9" r="1" fill="#222" /><ellipse cx="12" cy="12" rx="3" ry="2" fill="#f0b3a3" /><path d="M9 16c2 1 4 1 6 0" fill="none" stroke="#a34" /></svg>, label: "Spek - Bingo Pl...", w: 90 },
];

const ChromeMark = () => (
  <svg viewBox="0 0 24 24" className="size-6"><circle cx="12" cy="12" r="12" fill="#fbc116" /><path d="M12 12L1.600 6A12 12 0 0 1 22.400 6z" fill="#ea4335" /><path d="M1.600 6A12 12 0 0 0 12 24l5.200-9L12 12z" fill="#34a853" /><circle cx="12" cy="12" r="5.800" fill="#fff" /><circle cx="12" cy="12" r="4.600" fill="#1a73e8" /></svg>
);

const IdmMark = ({ className }: { className: string }) => (
  <svg viewBox="0 0 24 24" className={className}><circle cx="15" cy="8.500" r="8" fill="#4a8fd8" /><path d="M11 3c3-2 7-2 10 1l-3 3-5-1z" fill="#e8d83a" /><path d="M2 10c3-6 8-4 12 2l-3 2C8 10 6 9 5 12c0 3 3 6 8 7-6 2-13-3-11-9z" fill="#e23b2e" /><path d="M4 12c3-3 6-1 8 1l-2 2c-2-2-4-1-3 2z" fill="#f4c522" /><path d="M11 14l12-3-5 12-3-2-5 1z" fill="#1fa52c" /></svg>
);

function Taskbar() {
  return (
    <div className="flex h-10 items-center bg-[#004275] text-[12px] text-white">
      <div className="flex w-[55px] pl-4"><svg viewBox="0 0 16 16" className="size-4"><path d="M0 2.200L6.500 1.300v6.200H0zM7.400 1.200L16 0v7.500H7.400zM0 8.400h6.500v6.300L0 13.800zM7.400 8.400H16V16l-8.600-1.200z" fill="#fff" /></svg></div>
      {tasks.map((t, i) => (
        <div key={i} className="mr-[8.750px] flex h-10 w-[130px] shrink-0 items-center border-b-2 border-[#76b9ed] pt-[2px] pl-[3px]">
          <span className="mr-[5px] flex w-6 justify-center">{t.icon}</span>
          <Fit w={t.w}>{t.label}</Fit>
        </div>
      ))}
      <div className="flex w-[40px] shrink-0 justify-center">
        <svg viewBox="0 0 18 24" className="h-6 w-[18px]"><rect x=".5" y=".5" width="17" height="23" rx="1" fill="#d9ecf8" stroke="#7fb4d8" /><path d="M2.500 2.500h13v6h-13z" fill="#fdfdfd" stroke="#e8a33a" strokeWidth=".6" /><text x="10" y="8" fontSize="6" fill="#222">0</text><path d="M2.500 11.500h3v2h-3zM7 11.500h3v2H7zM11.500 11.500h3v2h-3zM2.500 15h3v2h-3zM7 15h3v2H7zM11.500 15h3v2h-3zM2.500 18.500h3v2h-3zM7 18.500h3v2H7z" fill="#7c9db5" /><path d="M12 18h3v4h-3z" fill="#f09a2a" /></svg>
      </div>
      <div className="ml-[3px] flex h-10 w-[137px] shrink-0 items-center border-b-2 border-[#76b9ed] bg-[#005a9e] pt-[2px] pl-[9px]">
        <span className="relative mr-1"><ChromeMark /><Badge /></span>
        <Fit w={90}>Everything Abo...</Fit>
      </div>
      <div className="ml-[5px] flex h-10 w-[129px] shrink-0 items-center border-b-2 border-[#76b9ed] pt-[2px] pl-[5px]">
        <svg viewBox="0 0 24 24" className="mr-1 size-6"><path d="M17.500 0v7L4 18.500 1 16zM17.500 24v-7L4 5.500 1 8z" fill="#0b7cc4" /><path d="M17.500 0l6 3v18l-6 3z" fill="#2aa6f2" /></svg>
        <Fit w={88}>index.html - sc...</Fit>
      </div>
      <div className="ml-[9px] flex h-10 w-[129px] shrink-0 items-center border-b-2 border-[#76b9ed] pt-[2px] pl-[5px]">
        <span className="relative mr-1 flex size-6 items-center justify-center rounded-full bg-white"><FaWhatsapp size={18} color="#25c25a" /><Badge /></span>
        <Fit w={82}>WhatsApp Web</Fit>
      </div>
      <div className="ml-[9px] flex h-10 w-[129px] shrink-0 items-center border-b-2 border-[#4be33b] bg-[linear-gradient(to_right,#28816c_107px,#1b5486_107px)] pt-[2px] pl-1">
        <IdmMark className="mr-[5px] size-6" />
        <Fit w={90}>83% Bingo Play...</Fit>
      </div>
      <div className="ml-[15px] flex w-[86px] shrink-0 flex-col text-[11px] leading-[13px]">
        <div className="flex justify-between"><Fit w={10}>U:</Fit><Fit w={56}>1.39 Mbit/s</Fit></div>
        <div className="flex justify-between"><Fit w={10}>D:</Fit><Fit w={57}>0.18 Mbit/s</Fit></div>
      </div>
      <svg viewBox="0 0 12 8" className="ml-2 h-2 w-3"><path d="M1 7l5-5.500L11 7" fill="none" stroke="#fff" strokeWidth="1.300" /></svg>
      <div className="ml-[9px] flex items-center gap-2">
        <svg viewBox="0 0 16 16" className="size-4"><rect width="16" height="16" fill="#3f423f" /><path d="M1.500 3.500l7-1.500M9 3l5 3M2 6v4l2 5M7 14V8.500l6 .5M12 12v3H7" fill="none" stroke="#8fe01f" strokeWidth="1.400" strokeDasharray="2.500 .8" /></svg>
        <IdmMark className="size-4" />
        <svg viewBox="0 0 16 16" className="size-4"><circle cx="9.500" cy="5.500" r="4.300" fill="none" stroke="#ff7a0e" strokeWidth="2.400" /><path d="M6.500 8.500L1.500 15" stroke="#ff7a0e" strokeWidth="2.600" /></svg>
        <span className="flex size-4 items-center justify-center rounded-full border border-[#9cc3ee] bg-[#4b8fdc] pb-px text-[10px] leading-none text-[#cfe4fa]">qb</span>
        <span className="flex size-4 items-center justify-center bg-linear-to-b from-[#e6f2fc] to-[#4fa9f2] text-[11px] leading-none font-bold tracking-[-0.500px] text-black">39</span>
        <span className="flex size-4 items-center justify-center bg-linear-to-b from-[#e6f2fc] to-[#4fa9f2] text-[11px] leading-none font-bold tracking-[-0.500px] text-black">33</span>
      </div>
      <div className="mb-px ml-[9px] flex text-[11px]">
        <Fit w={12} className="text-[#ffe83a]">50</Fit>
        <Fit w={16} className="ml-[10px] text-[#ffffb0]">4.7</Fit>
        <Fit w={12} className="ml-[10px] text-[#1fe87a]">47</Fit>
        <Fit w={16} className="ml-[10px] text-[#1ff0d8]">0.8</Fit>
      </div>
      <div className="ml-[9px] flex items-center gap-2">
        <svg viewBox="0 0 16 16" className="size-4"><rect width="16" height="16" fill="#3a2a12" /><circle cx="8.500" cy="7.500" r="4.500" fill="#d82a20" /><path d="M0 1l3.500 3L7 1M0 6l3.500 3L7 6M0 11l3.500 3L7 11" fill="none" stroke="#f4c820" strokeWidth="1.700" /><path d="M9 6l3.500-3L16 6M9 11l3.500-3 3.500 3M9 15.500l3.500-3 3.500 3" fill="none" stroke="#2fc82f" strokeWidth="1.700" /></svg>
        <svg viewBox="0 0 16 16" className="size-4"><path d="M5.500 5.500h9v6h-9zM15.500 7v3" fill="none" stroke="#fff" /><path d="M8 7h5v3H8z" fill="#fff" /><path d="M0 4h5v3H0zM1.500 2v2M3.500 2v2M2.500 7v4h3" fill="#fff" stroke="#fff" strokeWidth=".8" /></svg>
        <svg viewBox="0 0 16 16" className="size-4" fill="none" stroke="#fff"><path d="M4.500 3.500h11v7h-11zM10 10.500v3M7 13.500h6M.5 1.500h3v3h-3zM2 4.500v9h3" /></svg>
        <svg viewBox="0 0 16 16" className="size-4" fill="none" stroke="#fff"><path d="M.5 6h2l3-3v10l-3-3h-2zM8 5.500c1 1.500 1 3.500 0 5" /><path d="M10.500 4c2 2.500 2 5.500 0 8M12.800 2.500c3 3.500 3 7.500 0 11" opacity=".5" /></svg>
      </div>
      <div className="ml-[9px] flex w-[56px] shrink-0 flex-col items-center leading-[18px]">
        <Fit w={48}>12:30 AM</Fit>
        <Fit w={55}>10-Mar-24</Fit>
      </div>
      <div className="relative ml-[16px]">
        <svg viewBox="0 0 16 18" className="h-[18px] w-4"><path d="M0 0h16v12H9.500v4l-4-4H0z" fill="#fff" /><path d="M2.500 3.200h11M2.500 6h11M2.500 8.800h7" stroke="#004275" strokeWidth="1.200" /></svg>
        <span className="absolute top-[8px] left-[7px] flex size-[17px] items-center justify-center rounded-full border border-[#5f93bf] bg-[#0a4f86] pb-px text-[12px] leading-none font-semibold">6</span>
      </div>
      <div className="mr-1 ml-auto h-10 w-px bg-[#6c93b4]" />
    </div>
  );
}

export default function App() {
  return (
    <div className="flex h-[1080px] w-[1920px] flex-col overflow-hidden bg-white font-['Open_Sans',sans-serif]">
      <TabStrip />
      <Toolbar />
      <Bookmarks />
      <div className="flex h-[919px]">
        <main className="w-[1903px]">
          <YtHeader />
          <Player />
        </main>
        <ScrollBar />
      </div>
      <Taskbar />
    </div>
  );
}
